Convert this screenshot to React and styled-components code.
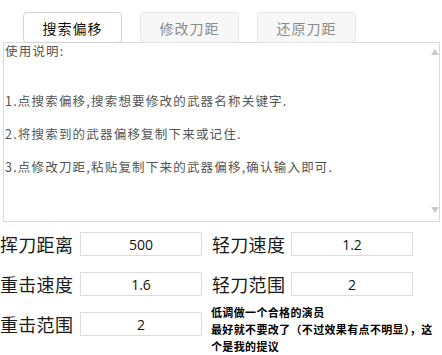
import styled, { createGlobalStyle } from 'styled-components';

const Global = createGlobalStyle`
body {
  margin: 0;
  background: #fff;
  font-family: "Noto Sans CJK SC", "Noto Sans", sans-serif;
}
`

const Page = styled.div`
width: 442px;
height: 355px;
overflow: hidden;
`

const TabBar = styled.div`
display: flex;
gap: 18px;
padding: 12px 0 0 23px;
position: relative;
z-index: 1;
`

const Tab = styled.div`
width: 99px;
height: 31px;
box-sizing: border-box;
display: flex;
align-items: center;
justify-content: center;
font-size: 14px;
letter-spacing: 1px;
border: 1px solid ${p => (p.$active ? '#d2d2d2' : '#e6e6e6')};
border-radius: 4px;
background: ${p => (p.$active ? '#fff' : '#f7f7f7')};
color: ${p => (p.$active ? '#111' : '#8a8a8a')};
margin-bottom: -1px;
`

const Panel = styled.div`
margin: 0 2px 0 3px;
height: 180px;
box-sizing: border-box;
border: 1px solid #d9d9d9;
display: flex;
`

const Help = styled.div`
flex: 1;
padding: 0 0 0 1px;
font-size: 12.5px;
letter-spacing: 1.2px;
line-height: 16.5px;
color: #555;
white-space: pre-line;
`

const Scroll = styled.div`
width: 9px;
display: flex;
flex-direction: column;
justify-content: space-between;
align-items: center;
padding: 6px 0 8px;
`

const Arrow = styled.div`
width: 0;
height: 0;
border-left: 4px solid transparent;
border-right: 4px solid transparent;
${p => (p.$down ? 'border-top: 6px solid #c9c9c9;' : 'border-bottom: 6px solid #c9c9c9;')}
`

const Fields = styled.div`
display: grid;
grid-template-columns: 202px 1fr;
grid-auto-rows: 24px;
column-gap: 10px;
row-gap: 16px;
margin-top: 10px;
`

const Field = styled.div`
display: flex;
align-items: center;
`

const Label = styled.div`
width: ${p => p.$w}px;
font-size: 18px;
letter-spacing: 0.3px;
color: #1a1a1a;
white-space: nowrap;
`

const Input = styled.div`
width: 122px;
height: 24px;
box-sizing: border-box;
border: 1px solid #dcdcdc;
display: flex;
align-items: center;
justify-content: center;
font-family: "Open Sans", "Noto Sans", sans-serif;
font-size: 14px;
color: #111;
`

const Note = styled.div`
align-self: start;
margin: -8px 0 0 -1px;
width: 230px;
font-size: 11px;
letter-spacing: 0.35px;
line-height: 17px;
font-weight: 700;
color: #000;
`

const helpText = `使用说明:


1.点搜索偏移,搜索想要修改的武器名称关键字.

2.将搜索到的武器偏移复制下来或记住.

3.点修改刀距,粘贴复制下来的武器偏移,确认输入即可.`

const App = () => {
    return (
        <Page>
            <Global />
            <TabBar>
                <Tab $active>搜索偏移</Tab>
                <Tab>修改刀距</Tab>
                <Tab>还原刀距</Tab>
            </TabBar>
            <Panel>
                <Help>{helpText}</Help>
                <Scroll>
                    <Arrow />
                    <Arrow $down />
                </Scroll>
            </Panel>
            <Fields>
                <Field>
                    <Label $w={80}>挥刀距离</Label>
                    <Input>500</Input>
                </Field>
                <Field>
                    <Label $w={79}>轻刀速度</Label>
                    <Input>1.2</Input>
                </Field>
                <Field>
                    <Label $w={80}>重击速度</Label>
                    <Input>1.6</Input>
                </Field>
                <Field>
                    <Label $w={79}>轻刀范围</Label>
                    <Input>2</Input>
                </Field>
                <Field>
                    <Label $w={80}>重击范围</Label>
                    <Input>2</Input>
                </Field>
                <Note>低调做一个合格的演员<br />最好就不要改了（不过效果有点不明显），这个是我的提议</Note>
            </Fields>
        </Page>
    )
}

export default App
